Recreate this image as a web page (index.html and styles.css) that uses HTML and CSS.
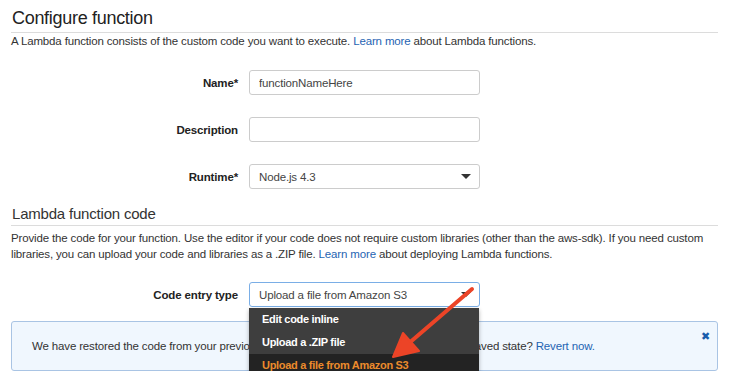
FILE: index.html
```html
<!DOCTYPE html>
<html lang="en">
<head>
    <meta charset="UTF-8">
    <meta name="viewport" content="width=device-width, initial-scale=1.0">
    <title>Configure function</title>
    <link rel="stylesheet" href="styles.css">
</head>
<body>
    <div class="page">
        <h1 class="section-title">Configure function</h1>
        <p class="section-desc">A Lambda function consists of the custom code you want to execute. <a href="#">Learn more</a> about Lambda functions.</p>

        <div class="form">
            <!-- 이름 -->
            <div class="form-row">
                <label class="form-label" for="name">Name*</label>
                <input type="text" id="name" class="form-control" value="functionNameHere">
            </div>
            <!-- 설명 -->
            <div class="form-row">
                <label class="form-label" for="desc">Description</label>
                <input type="text" id="desc" class="form-control">
            </div>
            <!-- 런타임 -->
            <div class="form-row">
                <label class="form-label">Runtime*</label>
                <div class="form-control select">Node.js 4.3<span class="caret"></span></div>
            </div>
        </div>

        <h2 class="sub-title">Lambda function code</h2>
        <p class="sub-desc">Provide the code for your function. Use the editor if your code does not require custom libraries (other than the aws-sdk). If you need custom libraries, you can upload your code and libraries as a .ZIP file. <a href="#">Learn more</a> about deploying Lambda functions.</p>

        <div class="form-row code-row">
            <label class="form-label">Code entry type</label>
            <div class="select-wrap">
                <div class="form-control select focused">Upload a file from Amazon S3<span class="caret"></span></div>
                <ul class="dropdown">
                    <li>Edit code inline</li>
                    <li>Upload a .ZIP file</li>
                    <li class="selected">Upload a file from Amazon S3</li>
                </ul>
            </div>
        </div>

        <div class="info-box">
            <span class="close-x">&#10006;</span>
            We have restored the code from your previous session. Do you want to revert to the last saved state? <a href="#">Revert now.</a>
        </div>
    </div>

    <!-- 화살표 표시 -->
    <svg class="arrow" width="740" height="383" viewBox="0 0 740 383">
        <line x1="472" y1="289" x2="408" y2="344" stroke="#ec4427" stroke-width="4" stroke-linecap="round"/>
        <polygon points="393,357 403,333 419,351" fill="#ec4427" stroke="#ec4427" stroke-width="2" stroke-linejoin="round"/>
    </svg>
</body>
</html>
```

FILE: styles.css
```css
body {
    font-family: "Liberation Sans", Arial, sans-serif;
    font-size: 11.5px;
    letter-spacing: -0.15px;
    color: #333;
    background-color: #fff;
    margin: 0;
    padding: 0;
    position: relative;
}

a {
    color: #1f64b3;
    text-decoration: none;
}

.page {
    width: 707px;
    padding: 0 11px;
}

.section-title {
    font-size: 18px;
    font-weight: normal;
    letter-spacing: -0.3px;
    line-height: 24px;
    margin: 0;
    padding: 6px 0 2px 1px;
    border-bottom: 1px solid #dcdcdc;
    color: #222;
}

.section-desc {
    margin: 0;
    line-height: 16px;
}

.form {
    margin-top: 21px;
    display: flex;
    flex-direction: column;
    gap: 22px;
}

.form-row {
    display: flex;
    align-items: center;
    gap: 11px;
}

.form-label {
    width: 227px;
    text-align: right;
    font-weight: bold;
    color: #222;
}

.form-control {
    box-sizing: border-box;
    width: 231px;
    height: 25px;
    padding: 0 9px;
    font-family: inherit;
    font-size: 11.5px;
    letter-spacing: -0.15px;
    color: #444;
    border: 1px solid #ccc;
    border-radius: 3px;
    background: #fff;
    margin: 0;
    outline: none;
}

.select {
    display: flex;
    align-items: center;
    justify-content: space-between;
    padding-right: 8px;
}

.select.focused {
    border-color: #7aaee6;
}

.caret {
    width: 0;
    height: 0;
    border-left: 5px solid transparent;
    border-right: 5px solid transparent;
    border-top: 5px solid #333;
}

.sub-title {
    font-size: 15px;
    font-weight: normal;
    letter-spacing: -0.2px;
    line-height: 20px;
    margin: 15px 0 0;
    padding: 0 0 1px 1px;
    border-bottom: 1px solid #dcdcdc;
    color: #333;
}

.sub-desc {
    margin: 4px 0 0;
    line-height: 16px;
}

.code-row {
    margin-top: 20px;
}

.select-wrap {
    position: relative;
}

.dropdown {
    position: absolute;
    top: 26px;
    left: 0;
    width: 230px;
    margin: 0;
    padding: 0;
    list-style: none;
    background-color: #3e3e3e;
    border-radius: 0 0 4px 4px;
    box-shadow: 0 2px 4px rgba(0, 0, 0, 0.3);
    overflow: hidden;
    z-index: 2;
}

.dropdown li {
    height: 23px;
    line-height: 23px;
    padding-left: 13px;
    font-size: 11px;
    letter-spacing: -0.3px;
    font-weight: bold;
    color: #fff;
}

.dropdown li.selected {
    background-color: #232323;
    color: #ec8b2c;
}

.info-box {
    position: relative;
    margin-top: 14px;
    padding: 16px 20px;
    line-height: 16px;
    background-color: #f0f7fe;
    border: 1px solid #a9c4e4;
    border-radius: 3px;
    color: #333;
}

.close-x {
    position: absolute;
    top: 6px;
    right: 7px;
    font-size: 11px;
    color: #1a5cab;
}

.arrow {
    position: absolute;
    top: 0;
    left: 0;
    pointer-events: none;
    z-index: 3;
}
```
